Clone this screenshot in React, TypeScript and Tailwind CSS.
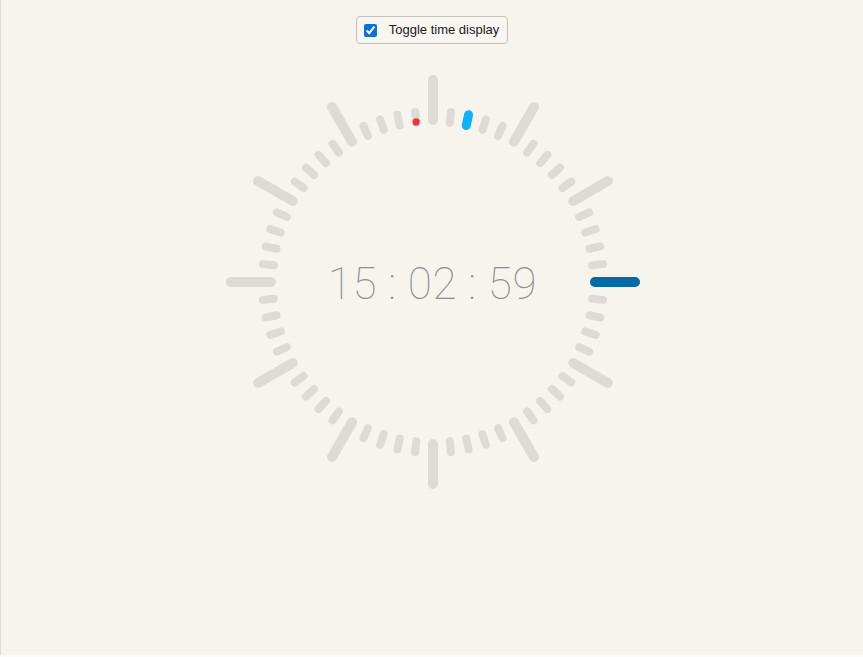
import React, { useState } from "react";

const CX = 220;
const CY = 220;

function pt(angleDeg: number, r: number) {
  const a = (angleDeg * Math.PI) / 180;
  return { x: CX + Math.sin(a) * r, y: CY - Math.cos(a) * r };
}

function Tick({ i, color, hour, w }: { i: number; color: string; hour: boolean; w?: number }) {
  const a = i * 6;
  const r1 = hour ? 162 : 160;
  const r2 = hour ? 202 : 171;
  const p1 = pt(a, r1);
  const p2 = pt(a, r2);
  return (
    <line
      x1={p1.x}
      y1={p1.y}
      x2={p2.x}
      y2={p2.y}
      stroke={color}
      strokeWidth={w ?? (hour ? 10 : 8)}
      strokeLinecap="round"
    />
  );
}

export default function App() {
  const [show, setShow] = useState(true);
  const ticks = Array.from({ length: 60 }, (_, i) => i);
  const sec = pt(59 * 6, 161);
  return (
    <div className="min-h-[657px] bg-[#f9fafb]">
      <div className="h-[655px] bg-[#f7f4ee] border-l border-[#dcdcdc] flex flex-col items-center pt-4">
        <label className="flex items-center h-[28px] pl-[7px] pr-[8px] gap-[12px] border border-[#c4c2bd] rounded-[4px] bg-[#f8f6f1] font-['Liberation_Sans',sans-serif] text-[13px] text-[#1a1a1a] cursor-pointer">
          <input
            type="checkbox"
            checked={show}
            onChange={(e) => setShow(e.target.checked)}
            className="w-[13px] h-[13px] m-0 accent-[#0b6fe0]"
          />
          <span>Toggle time display</span>
        </label>
        <div className="relative mt-[18px] w-[440px] h-[440px] ml-[1px]">
          <svg width="440" height="440" viewBox="0 0 440 440" className="absolute inset-0">
            {ticks.map((i) => (
              <Tick key={i} i={i} hour={i % 5 === 0} color="#dedbd6" />
            ))}
            <Tick i={15} hour={true} color="#0669a5" />
            <Tick i={2} hour={false} color="#0bb4f7" w={9} />
            <circle cx={sec.x} cy={sec.y} r={3.6} fill="#ec3340" />
          </svg>
          {show && (
            <div className="absolute inset-0 flex items-center justify-center pt-[4px]">
              <span className="font-['Roboto',sans-serif] font-thin text-[44px] leading-none tracking-[0.6px] text-[#8e8e8e] tabular-nums slashed-zero">
                15 : 02 : 59
              </span>
            </div>
          )}
        </div>
      </div>
    </div>
  );
}
